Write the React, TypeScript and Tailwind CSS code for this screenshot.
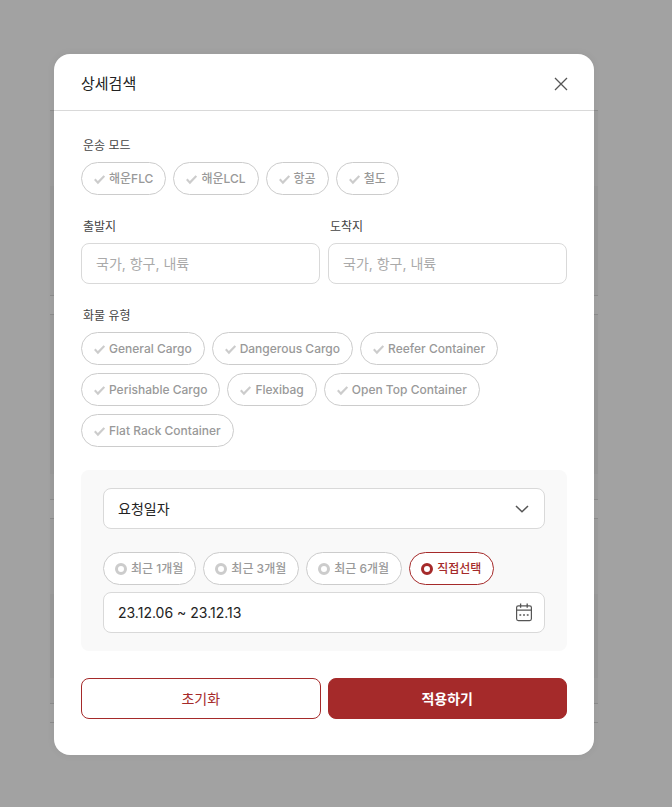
import { useState } from 'react';

const transportModes = ['해운FLC', '해운LCL', '항공', '철도'];

const cargoTypes = [
  'General Cargo',
  'Dangerous Cargo',
  'Reefer Container',
  'Perishable Cargo',
  'Flexibag',
  'Open Top Container',
  'Flat Rack Container',
];

const periods = ['최근 1개월', '최근 3개월', '최근 6개월', '직접선택'];

const fieldClass =
  'h-[41px] w-full rounded-lg border border-[#d9d9d9] bg-white px-[14px] text-sm text-[#222] outline-none';

const labelClass = 'mb-[6px] block pl-[2px] text-xs leading-5 text-[#444]';

const chipClass =
  'flex h-[33px] cursor-pointer items-center gap-1 rounded-full border bg-white pr-3 text-xs font-medium whitespace-nowrap';

function CheckIcon() {
  return (
    <svg width="11" height="11" viewBox="0 0 11 11" fill="none" className="mt-[2px]" aria-hidden="true">
      <path d="M0.8 5.3L3.9 8.6L10.3 1.9" stroke="currentColor" strokeWidth="2.1" />
    </svg>
  );
}

function RingIcon() {
  return (
    <svg width="12" height="12" viewBox="0 0 12 12" fill="none" className="mt-px" aria-hidden="true">
      <circle cx="6" cy="6" r="4.5" stroke="currentColor" strokeWidth="3" />
    </svg>
  );
}

function CloseIcon() {
  return (
    <svg width="14" height="14" viewBox="0 0 14 14" fill="none" aria-hidden="true">
      <path d="M1 1L13 13M13 1L1 13" stroke="currentColor" strokeWidth="1.3" />
    </svg>
  );
}

function ChevronIcon() {
  return (
    <svg width="14" height="8" viewBox="0 0 14 8" fill="none" aria-hidden="true">
      <path d="M1 1L7 6.8L13 1" stroke="currentColor" strokeWidth="1.5" />
    </svg>
  );
}

function CalendarIcon() {
  return (
    <svg width="18" height="19" viewBox="0 0 18 19" fill="none" aria-hidden="true">
      <rect x="1.6" y="2.8" width="14.8" height="14.8" rx="1.8" stroke="currentColor" strokeWidth="1.2" />
      <path d="M1.6 7.2H16.4M5.6 0.4V4.8M12.2 0.4V4.8" stroke="currentColor" strokeWidth="1.3" />
      <path d="M4.4 12H6.2M8.1 12H9.9M11.8 12H13.6" stroke="currentColor" strokeWidth="1.7" />
    </svg>
  );
}

function CheckGroup({ title, options }: { title: string; options: string[] }) {
  const [selected, setSelected] = useState<string[]>([]);

  const toggle = (option: string) => {
    setSelected((prev) =>
      prev.includes(option) ? prev.filter((o) => o !== option) : [...prev, option]
    );
  };

  return (
    <fieldset>
      <legend className={labelClass}>{title}</legend>
      <div className="flex flex-wrap gap-x-[7px] gap-y-2">
        {options.map((option) => {
          const active = selected.includes(option);
          return (
            <label
              key={option}
              className={`${chipClass} pl-3 ${
                active ? 'border-[#a52a2a] text-[#a52a2a]' : 'border-[#ccc] text-[#999]'
              }`}
            >
              <input
                type="checkbox"
                checked={active}
                onChange={() => toggle(option)}
                className="sr-only"
              />
              <span className={active ? 'text-[#a52a2a]' : 'text-[#ccc]'}>
                <CheckIcon />
              </span>
              {option}
            </label>
          );
        })}
      </div>
    </fieldset>
  );
}

function PlaceField({ id, title }: { id: string; title: string }) {
  return (
    <div className="min-w-0 flex-1">
      <label htmlFor={id} className={labelClass}>
        {title}
      </label>
      <input
        id={id}
        type="text"
        placeholder="국가, 항구, 내륙"
        className={`${fieldClass} placeholder:text-[#aaa]`}
      />
    </div>
  );
}

// Dimmed result list that stays visible at the edges of the dialog
function ResultList() {
  return (
    <div className="absolute -inset-x-1 top-14 space-y-[18px]" aria-hidden="true">
      {[0, 1, 2].map((row) => (
        <div key={row} className="flex h-[186px] flex-col border-y border-[#8c8c8c] bg-[#9d9d9d] pt-[75px]">
          <div className="h-[84px] bg-[#999]" />
        </div>
      ))}
      <div className="h-4 border-t border-[#8c8c8c]" />
    </div>
  );
}

export default function App() {
  const [period, setPeriod] = useState('직접선택');
  const [range, setRange] = useState('23.12.06 ~ 23.12.13');

  return (
    <div className="min-h-screen bg-[#a2a2a2] pt-[54px] pr-10 pb-[52px] pl-4 font-['Inter','Noto_Sans_CJK_KR',sans-serif]">
      <div className="relative mx-auto max-w-[540px]">
        <ResultList />
        <div
          role="dialog"
          aria-labelledby="search-title"
          className="relative rounded-2xl bg-white shadow-[0_0_8px_rgba(0,0,0,0.06)]"
        >
          <header className="flex items-center justify-between border-b border-[#d9d9d9] pt-[18px] pr-[26px] pb-[14px] pl-[27px]">
            <h1 id="search-title" className="text-[15px] leading-6 text-[#222]">
              상세검색
            </h1>
            <button type="button" aria-label="닫기" className="text-[#555]">
              <CloseIcon />
            </button>
          </header>

          <form className="px-[27px] pt-[25px] pb-9" onSubmit={(e) => e.preventDefault()}>
            <div className="space-y-[22px]">
              <CheckGroup title="운송 모드" options={transportModes} />
              <div className="flex gap-2">
                <PlaceField id="departure" title="출발지" />
                <PlaceField id="arrival" title="도착지" />
              </div>
              <CheckGroup title="화물 유형" options={cargoTypes} />
            </div>

            <div className="mt-[23px] rounded-lg bg-[#f9f9f9] px-[22px] py-[18px]">
              <div className="relative">
                <select aria-label="날짜 기준" className={`${fieldClass} appearance-none`}>
                  <option>요청일자</option>
                </select>
                <span className="pointer-events-none absolute inset-y-0 right-4 flex items-center text-[#555]">
                  <ChevronIcon />
                </span>
              </div>

              <div role="radiogroup" aria-label="기간" className="mt-[23px] flex flex-wrap gap-[7px]">
                {periods.map((item) => (
                  <label
                    key={item}
                    className={`${chipClass} pl-[11px] ${
                      period === item
                        ? 'border-[#a52a2a] font-bold text-[#a52a2a]'
                        : 'border-[#ccc] text-[#999]'
                    }`}
                  >
                    <input
                      type="radio"
                      name="period"
                      checked={period === item}
                      onChange={() => setPeriod(item)}
                      className="sr-only"
                    />
                    <span className={period === item ? 'text-[#a52a2a]' : 'text-[#ccc]'}>
                      <RingIcon />
                    </span>
                    {item}
                  </label>
                ))}
              </div>

              <div className="relative mt-[7px]">
                <input
                  type="text"
                  aria-label="조회 기간"
                  value={range}
                  onChange={(e) => setRange(e.target.value)}
                  className={fieldClass}
                />
                <button
                  type="button"
                  aria-label="달력 열기"
                  className="absolute inset-y-0 right-3 flex items-center text-[#555]"
                >
                  <CalendarIcon />
                </button>
              </div>
            </div>

            <div className="mt-[27px] flex gap-[7px]">
              <button
                type="reset"
                className="h-[41px] flex-1 rounded-lg border border-[#a52a2a] text-sm text-[#a52a2a]"
              >
                초기화
              </button>
              <button
                type="submit"
                className="h-[41px] flex-1 rounded-lg border border-[#a52a2a] bg-[#a52a2a] text-sm font-bold text-white"
              >
                적용하기
              </button>
            </div>
          </form>
        </div>
      </div>
    </div>
  );
}
